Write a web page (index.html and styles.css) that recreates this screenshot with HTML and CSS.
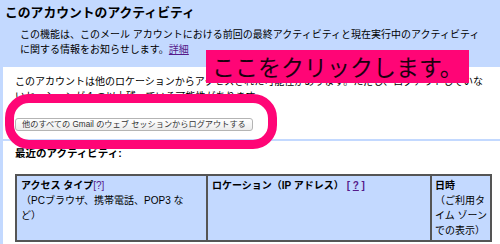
FILE: index.html
```html
<!DOCTYPE html>
<html lang="ja">
<head>
    <meta charset="UTF-8">
    <title>このアカウントのアクティビティ</title>
    <link rel="stylesheet" href="styles.css">
</head>
<body>
    <div class="header">
        <h1>このアカウントのアクティビティ</h1>
        <p class="intro">この機能は、このメール アカウントにおける前回の最終アクティビティと現在実行中のアクティビティに関する情報をお知らせします。<a href="#">詳細</a></p>
    </div>

    <div class="panel">
        <div class="sessions">
            <p>このアカウントは他のロケーションからアクセスされた可能性があります。ただし、ログアウトしていないセッションが 1 つ以上残っている可能性があります。</p>
            <button class="logout-btn">他のすべての Gmail のウェブ セッションからログアウトする</button>
        </div>

        <h2>最近のアクティビティ:</h2>
        <table class="activity">
            <tr>
                <th class="col-type"><b>アクセス タイプ</b><a href="#" class="help">[?]</a><br>（PCブラウザ、携帯電話、POP3 など）</th>
                <th class="col-loc"><b>ロケーション（IP アドレス） <span class="help">[ <a href="#">?</a> ]</span></b></th>
                <th class="col-date"><b>日時</b><br>（ご利用タイム ゾーンでの表示）</th>
            </tr>
        </table>
    </div>

    <!-- annotation overlays -->
    <div class="callout-ring"></div>
    <div class="callout-label">ここをクリックします。</div>
</body>
</html>
```

FILE: styles.css
```css
body {
    margin: 0;
    background: #c3d9ff;
    font-family: "Liberation Sans", "Noto Sans CJK JP", sans-serif;
    font-size: 10px;
    line-height: 15px;
    color: #000;
}

a {
    color: #551a8b;
}

.header {
    height: 63px;
    padding: 4px 0 0 5px;
}
h1 {
    margin: 0;
    font-size: 12.8px;
    line-height: 17px;
    font-weight: bold;
}
.intro {
    margin: 6px 12px 0 15px;
}

.panel {
    background: #fff;
    margin-left: 3px;
    padding-top: 7px;
    min-height: 170px;
}

.sessions {
    border-bottom: 2px solid #c3d9ff;
    padding: 0 10px 8px 12px;
}
.sessions p {
    margin: 0;
}
.logout-btn {
    display: block;
    margin-top: 14px;
    height: 13px;
    padding: 0 6px;
    font-family: "Liberation Sans", "Noto Sans CJK JP", sans-serif;
    font-size: 8.2px;
    line-height: 11px;
    color: #333;
    background: linear-gradient(#ffffff, #ececec);
    border: 1px solid #b4b4b4;
    border-radius: 3px;
}

h2 {
    margin: 5px 0 0 12px;
    font-size: 10.5px;
    line-height: 15px;
    font-weight: bold;
}

.activity {
    margin: 13px 0 0 12px;
    width: 477px;
    table-layout: fixed;
    border-collapse: separate;
    border-spacing: 0;
    border: 1px solid #555;
}
.activity th {
    box-sizing: border-box;
    background: #c3d9ff;
    border: 1px solid #555;
    padding: 2px 4px;
    text-align: left;
    vertical-align: top;
    font-weight: normal;
}
.col-type {
    width: 191px;
    padding-right: 10px !important;
}
.col-loc {
    width: 224px;
}
.col-date {
    width: 60px;
    padding: 2px 1px 2px 3px !important;
}
.help {
    color: #551a8b;
    text-decoration: none;
}

/* annotation overlays */
.callout-ring {
    position: absolute;
    left: 5px;
    top: 94px;
    width: 254px;
    height: 37px;
    border: 9px solid #ff0576;
    border-radius: 24px;
}
.callout-label {
    position: absolute;
    left: 206px;
    top: 50px;
    height: 33px;
    padding: 0 6px;
    background: #ff0576;
    color: #1c0010;
    font-family: "Noto Sans CJK JP", sans-serif;
    font-size: 23px;
    line-height: 33px;
}
```
